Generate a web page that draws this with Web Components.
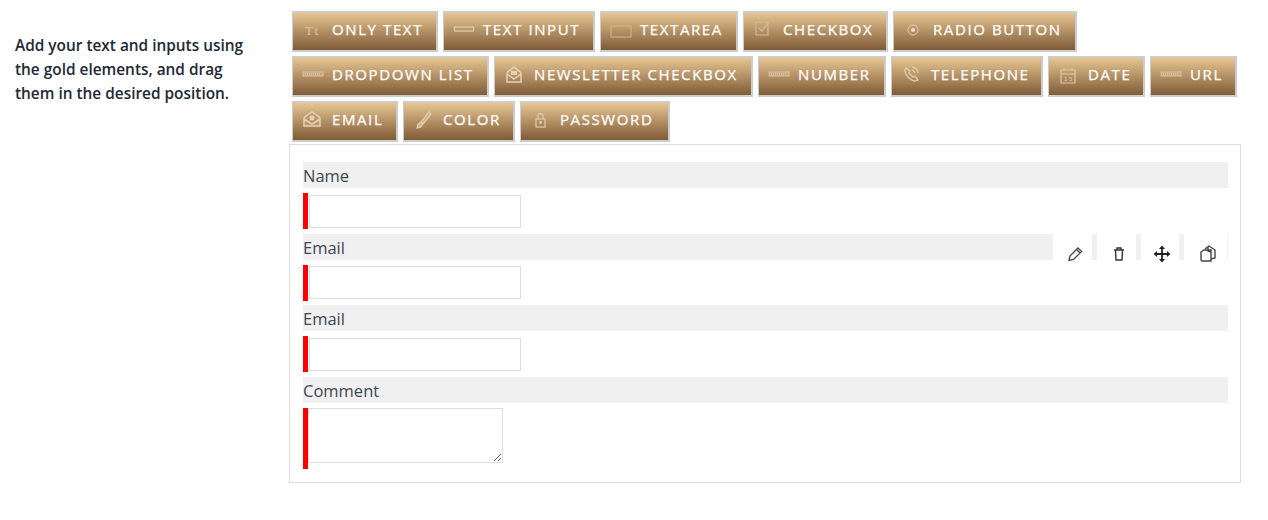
<!DOCTYPE html>
<html>
<head>
<meta charset="utf-8">
<title>Form builder</title>
<style>
  body { margin: 0; background: #fff; font-family: "Open Sans", "Noto Sans", sans-serif; }
</style>
</head>
<body>
<form-builder>
  <p slot="intro">Add your text and inputs using the gold elements, and drag them in the desired position.</p>
  <gold-button slot="tools" w="146" icon="text">ONLY TEXT</gold-button>
  <gold-button slot="tools" w="152" icon="input">TEXT INPUT</gold-button>
  <gold-button slot="tools" w="138" icon="area">TEXTAREA</gold-button>
  <gold-button slot="tools" w="145" icon="check">CHECKBOX</gold-button>
  <gold-button slot="tools" w="184" icon="radio">RADIO BUTTON</gold-button>
  <gold-button slot="tools" w="197" icon="drop">DROPDOWN LIST</gold-button>
  <gold-button slot="tools" w="259" icon="news">NEWSLETTER CHECKBOX</gold-button>
  <gold-button slot="tools" w="128" icon="drop">NUMBER</gold-button>
  <gold-button slot="tools" w="152" icon="phone">TELEPHONE</gold-button>
  <gold-button slot="tools" w="97" icon="date">DATE</gold-button>
  <gold-button slot="tools" w="87" icon="drop">URL</gold-button>
  <gold-button slot="tools" w="106" icon="mail">EMAIL</gold-button>
  <gold-button slot="tools" w="112" icon="color">COLOR</gold-button>
  <gold-button slot="tools" w="150" icon="lock">PASSWORD</gold-button>

  <form-field slot="fields" label="Name"></form-field>
  <form-field slot="fields" label="Email" hovered></form-field>
  <form-field slot="fields" label="Email"></form-field>
  <form-field slot="fields" label="Comment" type="textarea"></form-field>
</form-builder>

<script>
const ICONS = {
  text: '<text x="3" y="16" font-family="Liberation Serif" font-size="13" fill="#d9c2a0">Tt</text>',
  input: '<rect x="1.500" y="8" width="19" height="4" fill="none" stroke="#dcc6a4" stroke-width="1.400"/>',
  area: '<rect x="1" y="7" width="20" height="11" fill="none" stroke="#cdb08a" stroke-width="1.200"/>',
  check: '<path d="M3 3h12v13H3zM6 9l3 3 7-9" fill="none" stroke="#d4b892" stroke-width="1.200"/>',
  radio: '<circle cx="10" cy="11" r="5" fill="none" stroke="#e3cdaa"/><circle cx="10" cy="11" r="2" fill="#efe0c8"/>',
  drop: '<rect x="1" y="8" width="20" height="4" fill="#c4a67f" stroke="#d9c3a0"/><path d="M3 10h16" stroke="#e6d6bc" stroke-dasharray="1 1"/>',
  news: '<path d="M3 10q0-2 2-3l5-4 5 4q2 1 2 3v8H3zM3 10l7 5 7-5" fill="none" stroke="#e6d3b5" stroke-width="1.500"/><rect x="7" y="7" width="6" height="4" fill="#e6d3b5"/>',
  phone: '<path d="M5 4c-2 2-1 6 2 9s7 5 10 3l-3-4-2 1-4-4 1-2zM11 3a7 7 0 0 1 6 6M11 6a4 4 0 0 1 3 3" fill="none" stroke="#dcc6a4" stroke-width="1.500"/>',
  date: '<path d="M3 6h14v13H3zM3 10h14M6 4v3M14 4v3" fill="none" stroke="#dcc6a4" stroke-width="1.200"/><text x="6" y="17" font-family="Liberation Sans" font-size="6" fill="#e3cdaa">15</text>',
  mail: '<path d="M2 10q0-2 2-3l6-4 6 4q2 1 2 3v7H2zM2 10l8 5 8-5" fill="#bb9b73" stroke="#e6d3b5" stroke-width="1.500"/><circle cx="10" cy="9" r="2.500" fill="#e6d3b5"/>',
  color: '<path d="M8 13L16 3l2 2-8 10zM8 13l-3 2-1 4 4-1 2-3" fill="#cfb48e" stroke="#e3cfb0" stroke-width="1.200"/>',
  lock: '<rect x="6" y="10" width="9" height="8" fill="none" stroke="#dcc6a4" stroke-width="1.300"/><path d="M8 10V7a2.500 2.500 0 0 1 5 0v3" fill="none" stroke="#dcc6a4" stroke-width="1.300"/><rect x="9.500" y="12" width="2" height="3" fill="#e3cdaa"/>'
};

class GoldButton extends HTMLElement {
  constructor() {
    super();
    this.attachShadow({ mode: 'open' });
  }

  connectedCallback() {
    const icon = ICONS[this.getAttribute('icon')] || '';
    this.shadowRoot.innerHTML = `
      <style>
        :host {
          display: flex;
          align-items: center;
          box-sizing: border-box;
          width: ${this.getAttribute('w')}px;
          height: 41px;
          padding: 0 0 6px 9px;
          border: 2px solid #ccc;
          border-width: 2px 2px 2px 1px;
          background: linear-gradient(#e6c592, #7f5b36);
          color: #fff;
          font-size: 15px;
          font-weight: 400;
          letter-spacing: 1.6px;
          -webkit-text-stroke: 0.25px #fff;
          white-space: nowrap;
        }
        svg { width: 22px; height: 20px; flex: none; margin-right: 8px; }
      </style>
      <svg viewBox="0 0 22 20">${icon}</svg><slot></slot>`;
  }
}
customElements.define('gold-button', GoldButton);

class FormField extends HTMLElement {
  constructor() {
    super();
    this.attachShadow({ mode: 'open' });
  }

  connectedCallback() {
    const isArea = this.getAttribute('type') === 'textarea';
    const hovered = this.hasAttribute('hovered');
    this.shadowRoot.innerHTML = `
      <style>
        :host { display: block; position: relative; margin-bottom: 4.5px; }
        .label {
          height: 26px;
          line-height: 27px;
          background: #f0f0f0;
          color: #3f4652;
          font-size: 16.500px;
        }
        .control {
          display: flex;
          align-items: flex-start;
          margin-top: 5px;
          border-left: 5px solid #f00;
          height: ${isArea ? 61 : 36}px;
        }
        input, textarea {
          display: block;
          box-sizing: border-box;
          margin: 1.5px 0 0 1px;
          padding: 0;
          background: #fff;
          border: 1px solid #ddd;
          outline: 0;
        }
        input { width: 212px; height: 33px; }
        textarea { width: 195px; height: 55px; margin: 0; }
        .bar {
          position: absolute;
          top: 0;
          right: 0;
          width: 175px;
          height: 26px;
          display: grid;
          grid-template-columns: repeat(4, 1fr);
          background: #fff;
        }
        .bar span { display: flex; justify-content: center; height: 26px; padding-left: 5px; border-right: 5px solid #f0f0f0; }
        .bar span:last-child { border-right-width: 1px; }
        .bar svg { width: 18px; height: 18px; margin-top: 11px; flex: none; }
      </style>
      <div class="label">${this.getAttribute('label')}</div>
      ${hovered ? `<div class="bar">
        <span><svg viewBox="0 0 18 18"><path d="M3 15.500l1-4.500 8-8 3.500 3.500-8 8zM10.500 4.500l3.500 3.500" fill="none" stroke="#444" stroke-width="1.300"/></svg></span>
        <span><svg viewBox="0 0 18 18"><path d="M4 5h10M7 5V3h4v2M5.500 5l.5 10h6l.5-10" fill="none" stroke="#333" stroke-width="1.400"/></svg></span>
        <span><svg viewBox="0 0 18 18"><path d="M9 2v14M2 9h14" stroke="#222" stroke-width="1.800"/><path d="M9 .5l3 3.500H6zM9 17.500L6 14h6zM.5 9L4 6v6zM17.500 9L14 12V6z" fill="#222"/></svg></span>
        <span><svg viewBox="0 0 18 18"><path d="M6 4l4-3 6 4v8l-4 1" fill="none" stroke="#444" stroke-width="1.400"/><path d="M9 2v4l3 1M2 7l3-2h7v11H3l-1-1z" fill="none" stroke="#444" stroke-width="1.400"/></svg></span>
      </div>` : ''}
      <div class="control">${isArea ? '<textarea></textarea>' : '<input type="text">'}</div>`;
  }
}
customElements.define('form-field', FormField);

class FormBuilder extends HTMLElement {
  constructor() {
    super();
    this.attachShadow({ mode: 'open' });
    this.shadowRoot.innerHTML = `
      <style>
        :host { display: flex; width: 1268px; height: 520px; box-sizing: border-box; padding: 11px 27px 0 15px; }
        .intro { width: 274px; flex: none; padding-top: 23px; color: #212936; font-size: 15.400px; font-weight: 600; line-height: 24px; }
        ::slotted(p) { margin: 0; width: 235px; }
        .main { flex: 1; min-width: 0; }
        .tools { display: flex; flex-wrap: wrap; gap: 4px 5px; margin-left: 3px; }
        .fields {
          box-sizing: border-box;
          height: 339px;
          margin-top: 2px;
          padding: 17px 12px 0 13px;
          border: 1px solid #ddd;
        }
      </style>
      <div class="intro"><slot name="intro"></slot></div>
      <div class="main">
        <div class="tools"><slot name="tools"></slot></div>
        <div class="fields"><slot name="fields"></slot></div>
      </div>`;
  }
}
customElements.define('form-builder', FormBuilder);
</script>
</body>
</html>
